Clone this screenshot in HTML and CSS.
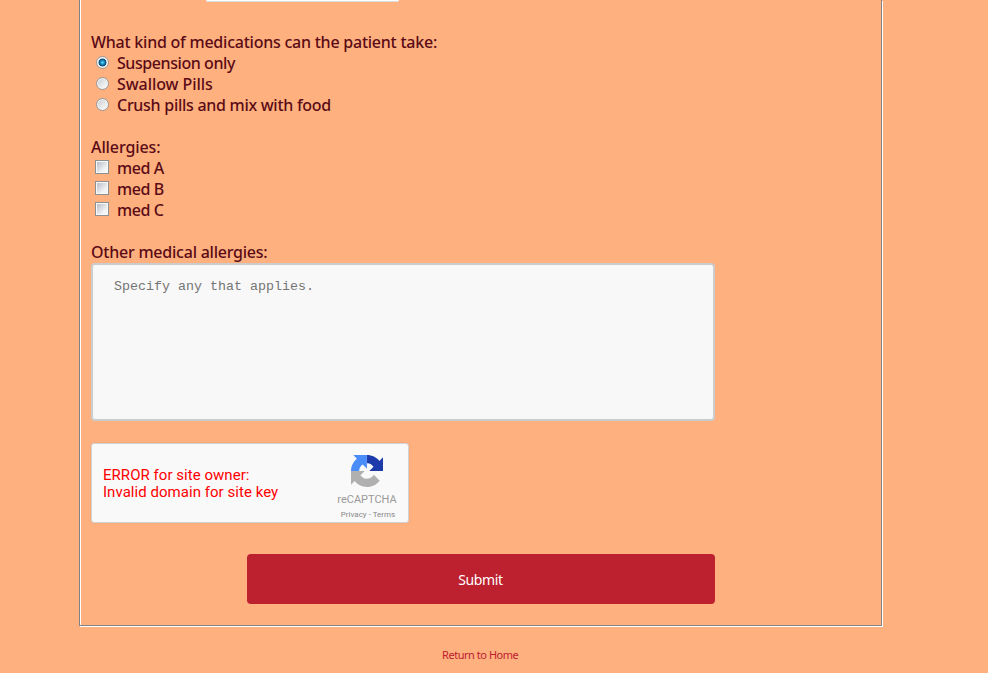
FILE: index.html
```html
<!DOCTYPE html>
<html lang="en">
<head>
<meta charset="utf-8">
<title>Patient form</title>
<link rel="stylesheet" href="styles.css">
</head>
<body>
<form class="panel">
  <div class="field-end"></div>
  <section class="group">
    <div class="row"><span class="t-question">What kind of medications can the patient take:</span></div>
    <label class="row"><input class="radio" type="radio" name="kind" checked><span class="t-suspension">Suspension only</span></label>
    <label class="row"><input class="radio" type="radio" name="kind"><span class="t-swallow">Swallow Pills</span></label>
    <label class="row"><input class="radio" type="radio" name="kind"><span class="t-crush">Crush pills and mix with food</span></label>
  </section>
  <section class="group">
    <div class="row"><span class="t-allergies">Allergies:</span></div>
    <label class="row"><input class="check" type="checkbox"><span class="t-med">med A</span></label>
    <label class="row"><input class="check" type="checkbox"><span class="t-med">med B</span></label>
    <label class="row"><input class="check" type="checkbox"><span class="t-med">med C</span></label>
  </section>
  <div class="row"><span class="t-other">Other medical allergies:</span></div>
  <textarea class="notes" placeholder="Specify any that applies."></textarea>
  <div class="captcha">
    <div class="error"><div>ERROR for site owner:</div><div>Invalid domain for site key</div></div>
    <div class="brand">
      <svg class="logo" width="32" height="32" viewBox="0 0 64 64">
        <path fill="#1c3aa9" d="M64 31.955l-.033-1.37V4.687l-7.16 7.16C50.948 4.674 42.033.093 32.05.093V16.35c.485 0 .86.057 1.135.163 4.976.393 9.288 3.14 11.828 7.124l-8.307 8.307L64 31.953"/>
        <path fill="#4b8df8" d="M31.862.094l-1.37.033H4.594l7.16 7.16C4.58 13.147 0 22.06 0 32.046h16.26c0-.485.057-.86.163-1.135.393-4.976 3.14-9.288 7.124-11.828l8.307 8.307L31.86.095"/>
        <path fill="#b0b0b0" d="M.001 32.045l.033 1.37v25.898l7.16-7.16c5.86 7.173 14.774 11.754 24.76 11.754 10.4 0 19.622-4.96 25.458-12.64l-11.736-11.86a15.55 15.55 0 0 1-4.754 5.334c-2.05 1.6-4.952 2.906-8.968 2.906-.485 0-.86-.057-1.135-.163-4.976-.393-9.288-3.14-11.828-7.124l8.307-8.307c-10.522.04-22.4.066-27.295-.005"/>
      </svg>
      <div class="name">reCAPTCHA</div>
      <div class="legal">Privacy - Terms</div>
    </div>
  </div>
  <button class="submit" type="button"><span>Submit</span></button>
</form>
<footer class="footer"><a class="home">Return to Home</a></footer>
</body>
</html>
```
FILE: styles.css
```css
* { box-sizing: border-box; }
body {
  margin: 0;
  height: 673px;
  overflow: hidden;
  background: #ffb07f;
  color: #5a0b16;
  font: 500 16px/21px "Noto Sans", sans-serif;
}
.panel {
  width: 803px;
  height: 626px;
  margin-left: 79px;
  padding-left: 10px;
  border: solid #828282;
  border-width: 0 1px 1px;
  box-shadow: inset 1px 0 #fff, 1px 1px #fff;
}
.field-end {
  width: 193px;
  height: 2px;
  margin: 0 0 30px 116px;
  background: #fff;
  border-bottom: 1px solid #ddd;
  border-radius: 0 0 3px 3px;
}
.group { margin-bottom: 21px; }
.row {
  display: flex;
  align-items: center;
  height: 21px;
  padding-left: 1px;
  white-space: nowrap;
}
.t-question { letter-spacing: -.235px; }
.t-suspension { letter-spacing: -.43px; }
.t-swallow { letter-spacing: -.06px; }
.t-crush { letter-spacing: -.28px; }
.t-allergies { letter-spacing: -.1px; }
.t-med { letter-spacing: -.4px; }
.t-other { letter-spacing: -.23px; }
.radio, .check { appearance: none; flex: none; }
.radio {
  width: 13px;
  height: 13px;
  margin: 0 8px 2px 5px;
  border: 1px solid #999;
  border-radius: 50%;
  background: linear-gradient(135deg, #c5c9cf, #f4f4f4 75%);
  box-shadow: inset 0 0 0 1px #f2f2f2;
}
.radio:checked {
  background: radial-gradient(circle at 50% 50%, #6de0ff 0, #1696cf 22%, #12486e 46%, #e9eef2 56%);
}
.check {
  width: 14px;
  height: 14px;
  margin: 0 8px 3px 4px;
  border: 1px solid #8b9091;
  background: linear-gradient(135deg, #b8bdc8, #f4f4f4 75%) content-box, #f8f8f8;
  padding: 1px;
}
.notes {
  display: block;
  width: 624px;
  height: 158px;
  margin: 0 0 22px 1px;
  padding: 12px 21px;
  border: 2px solid #ccc;
  border-radius: 4px;
  background: #f8f8f8;
  resize: none;
  outline: none;
  font: 13.33px/20px "Liberation Mono", monospace;
}
.notes::placeholder { color: #757575; opacity: 1; }
.captcha {
  display: flex;
  justify-content: space-between;
  width: 318px;
  height: 80px;
  margin: 0 0 31px 1px;
  padding: 0 11px;
  border: 1px solid #d3d3d3;
  border-radius: 3px;
  background: #f9f9f9;
  box-shadow: 0 0 3px rgba(0,0,0,.08);
  white-space: nowrap;
}
.error { padding-top: 23px; color: #f00; font: 15px/17px Roboto, sans-serif; letter-spacing: .04px; }
.brand { width: 60px; padding-top: 11px; text-align: center; color: #9b9b9b; font-family: Roboto, sans-serif; }
.logo { display: block; margin: 0 auto; }
.name { font-size: 11px; line-height: 12px; margin-top: 7px; font-weight: 400; }
.legal { font-size: 8px; line-height: 10px; margin-top: 4px; padding-left: 2px; color: #888; font-weight: 400; }
.submit {
  display: block;
  width: 468px;
  height: 50px;
  margin-left: 157px;
  padding: 2px 1px 0 0;
  border: 0;
  border-radius: 4px;
  background: #bd202f;
  color: #fff;
  font: 14px/20px "Noto Sans", sans-serif;
  letter-spacing: -.35px;
}
.footer { display: flex; padding: 21px 0 0 442px; }
.home { color: #bd202f; font: 11px/16px "Noto Sans", sans-serif; letter-spacing: -.46px; white-space: nowrap; }
```
